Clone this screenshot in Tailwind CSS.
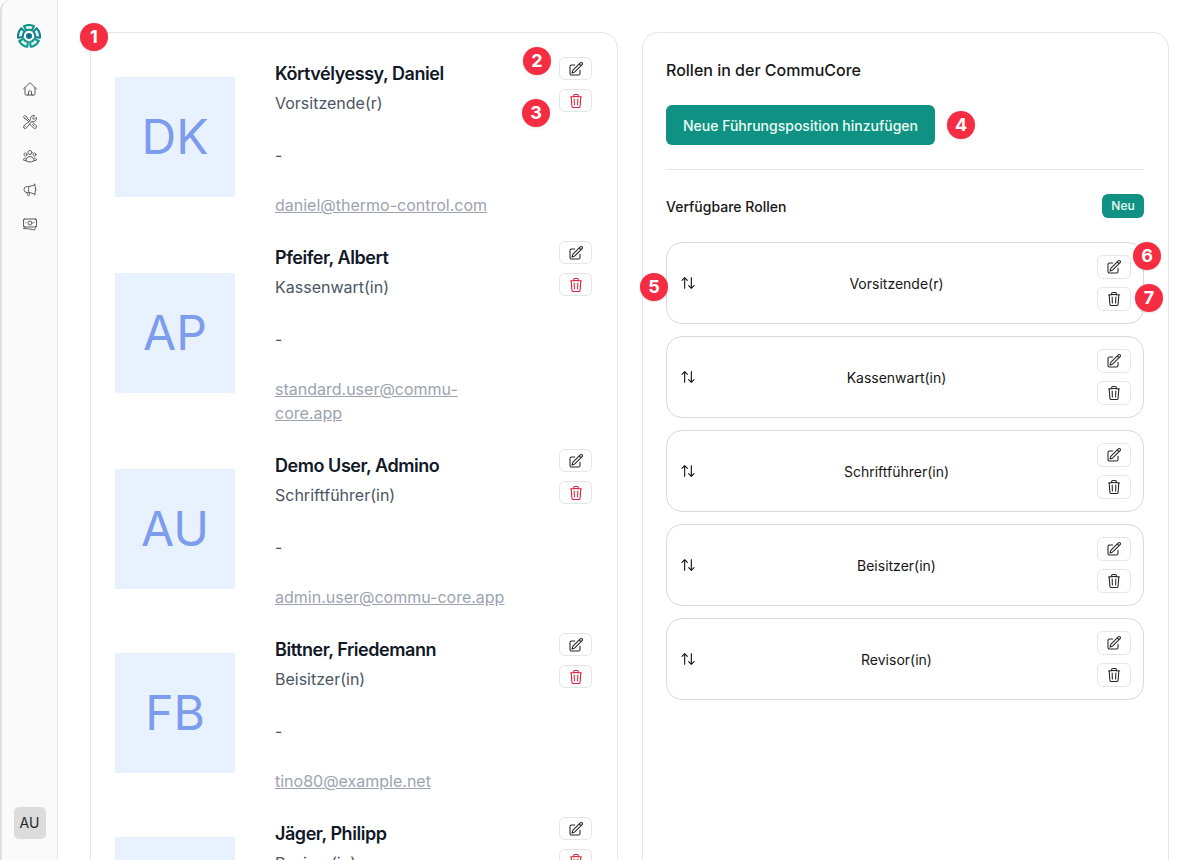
<!doctype html>
<html lang="de">
<head>
<meta charset="utf-8">
<script src="https://cdn.jsdelivr.net/npm/@tailwindcss/browser@4"></script>
<title>CommuCore</title>
</head>
<body class="bg-white">
<div class="relative flex h-[860px] w-[1200px] overflow-hidden bg-white font-['Inter',sans-serif] text-[#0f172a]">
  <aside class="flex h-full w-[58px] shrink-0 flex-col items-center rounded-tl-[10px] border-r border-l-2 border-r-[#e5e5e5] border-l-[#e0e0e0] bg-[#fafafa]">
    <svg class="mt-[24px] mr-px h-[24px] w-[24px]" viewBox="0 0 24 24" fill="#e3f3f1" stroke-width="2" stroke-linejoin="round">
      <circle cx="12" cy="12" r="3" fill="#0c6f8c"/>
      <path stroke="#0f9283" d="M7.01 2.2A11 11 0 0 1 16.99 2.2L14.81 6.48A6.2 6.2 0 0 0 9.19 6.48Z"/>
      <path stroke="#0e7f90" d="M19.78 4.22A11 11 0 0 1 22.86 13.72L18.12 12.97A6.2 6.2 0 0 0 16.38 7.62Z"/>
      <path stroke="#10968a" d="M21.8 16.99A11 11 0 0 1 13.72 22.86L12.97 18.12A6.2 6.2 0 0 0 17.52 14.81Z"/>
      <path stroke="#10968a" d="M2.2 16.99A11 11 0 0 0 10.28 22.86L11.03 18.12A6.2 6.2 0 0 1 6.48 14.81Z"/>
      <path stroke="#0e7f90" d="M4.22 4.22A11 11 0 0 0 1.14 13.72L5.88 12.97A6.2 6.2 0 0 1 7.62 7.62Z"/>
    </svg>
    <nav class="mt-[32px] flex flex-col items-center gap-[18px] text-[#5f5f5f]">
      <svg class="h-[16px] w-[16px] translate-y-px" viewBox="0 0 24 24" fill="none" stroke="currentColor" stroke-width="1.5" stroke-linecap="round" stroke-linejoin="round"><path d="m2.25 12 8.954-8.955c.44-.439 1.152-.439 1.591 0L21.75 12M4.5 9.75v10.125c0 .621.504 1.125 1.125 1.125H9.75v-4.875c0-.621.504-1.125 1.125-1.125h2.25c.621 0 1.125.504 1.125 1.125V21h4.125c.621 0 1.125-.504 1.125-1.125V9.75M8.25 21h8.25"/></svg>
      <svg class="h-[16px] w-[16px]" viewBox="0 0 24 24" fill="none" stroke="currentColor" stroke-width="1.5" stroke-linecap="round" stroke-linejoin="round"><path d="M11.42 15.17 17.25 21A2.652 2.652 0 0 0 21 17.25l-5.877-5.877M11.42 15.17l2.496-3.03c.317-.384.74-.626 1.208-.766M11.42 15.17l-4.655 5.653a2.548 2.548 0 1 1-3.586-3.586l6.837-5.63m5.108-.233c.55-.164 1.163-.188 1.743-.14a4.5 4.5 0 0 0 4.486-6.336l-3.276 3.277a3.004 3.004 0 0 1-2.25-2.25l3.276-3.276a4.5 4.5 0 0 0-6.336 4.486c.091 1.076-.071 2.264-.904 2.95l-.102.085m-1.745 1.437L5.909 7.5H4.5L2.25 3.75l1.5-1.5L7.5 4.5v1.409l4.26 4.26m-1.745 1.437 1.745-1.437m6.615 8.206L15.75 15.75M4.867 19.125h.008v.008h-.008v-.008Z"/></svg>
      <svg class="h-[16px] w-[16px]" viewBox="0 0 24 24" fill="none" stroke="currentColor" stroke-width="1.5" stroke-linecap="round" stroke-linejoin="round"><path d="M18 18.72a9.094 9.094 0 0 0 3.741-.479 3 3 0 0 0-4.682-2.72m.94 3.198.001.031c0 .225-.012.447-.037.666A11.944 11.944 0 0 1 12 21c-2.17 0-4.207-.576-5.963-1.584A6.062 6.062 0 0 1 6 18.719m12 0a5.971 5.971 0 0 0-.941-3.197m0 0A5.995 5.995 0 0 0 12 12.75a5.995 5.995 0 0 0-5.058 2.772m0 0a3 3 0 0 0-4.681 2.72 8.986 8.986 0 0 0 3.74.477m.94-3.197a5.971 5.971 0 0 0-.94 3.197M15 6.75a3 3 0 1 1-6 0 3 3 0 0 1 6 0Zm6 3a2.25 2.25 0 1 1-4.5 0 2.25 2.25 0 0 1 4.5 0Zm-13.5 0a2.25 2.25 0 1 1-4.5 0 2.25 2.25 0 0 1 4.5 0Z"/></svg>
      <svg class="h-[16px] w-[16px]" viewBox="0 0 24 24" fill="none" stroke="currentColor" stroke-width="1.5" stroke-linecap="round" stroke-linejoin="round"><path d="M10.34 15.84c-.688-.06-1.386-.09-2.09-.09H7.5a4.5 4.5 0 1 1 0-9h.75c.704 0 1.402-.03 2.09-.09m0 9.18c.253.962.584 1.892.985 2.783.247.55.06 1.21-.463 1.511l-.657.38c-.551.318-1.26.117-1.527-.461a20.845 20.845 0 0 1-1.44-4.282m3.102.069a18.03 18.03 0 0 1-.59-4.59c0-1.586.205-3.124.59-4.59m0 9.18a23.848 23.848 0 0 1 8.835 2.535M10.34 6.66a23.847 23.847 0 0 0 8.835-2.535m0 0A23.74 23.74 0 0 0 18.795 3m.38 1.125a23.91 23.91 0 0 1 1.014 5.395m-1.014 8.855c-.118.38-.245.754-.38 1.125m.38-1.125a23.91 23.91 0 0 0 1.014-5.395m0-3.46c.495.413.811 1.035.811 1.73 0 .695-.316 1.317-.811 1.73m0-3.46a24.347 24.347 0 0 1 0 3.46"/></svg>
      <svg class="h-[16px] w-[16px]" viewBox="0 0 24 24" fill="none" stroke="currentColor" stroke-width="1.5" stroke-linecap="round" stroke-linejoin="round"><path d="M2.25 18.75a60.07 60.07 0 0 1 15.797 2.101c.727.198 1.453-.342 1.453-1.096V18.75M3.75 4.5v.75A.75.75 0 0 1 3 6h-.75m0 0v-.375c0-.621.504-1.125 1.125-1.125H20.25M2.25 6v9m18-10.5v.75c0 .414.336.75.75.75h.75m-1.5-1.5h.375c.621 0 1.125.504 1.125 1.125v9.75c0 .621-.504 1.125-1.125 1.125h-.375m1.5-1.5H21a.75.75 0 0 0-.75.75v.75m0 0H3.75m0 0h-.375a1.125 1.125 0 0 1-1.125-1.125V15m1.5 1.5v-.75A.75.75 0 0 0 3 15h-.75M15 10.5a3 3 0 1 1-6 0 3 3 0 0 1 6 0Zm3 0h.008v.008H18V10.5Zm-12 0h.008v.008H6V10.5Z"/></svg>
    </nav>
    <div class="mt-auto mb-[21px] flex h-[32px] w-[32px] items-center justify-center rounded-[5px] bg-[#dcdcdc] text-sm text-[#262626]">AU</div>
  </aside>

  <main class="flex flex-1 items-start gap-[24px] pt-[32px] pl-[32px]">
    <section class="h-[900px] w-[528px] shrink-0 rounded-2xl border border-[#e5e5e5] pt-[24px] pr-[25px] pl-[24px]">
      <div class="flex flex-col gap-[24px]">
        <article class="flex items-center">
          <div class="flex h-[120px] w-[120px] shrink-0 items-center justify-center bg-[#e8f1fe] text-5xl text-[#7c9cec]">DK</div>
          <div class="ml-[40px] w-[240px] self-start">
            <h3 class="text-lg leading-[34px] font-semibold tracking-tight text-[#111827]">Körtvélyessy, Daniel</h3>
            <p class="text-base leading-[24px] text-[#4b5563]">Vorsitzende(r)</p>
            <p class="mt-[28px] text-base leading-[24px] text-[#4b5563]">-</p>
            <a class="mt-[26px] block text-base leading-[24px] text-[#9ca3af] underline">daniel@thermo-control.com</a>
          </div>
          <div class="ml-auto flex flex-col gap-[9px] self-start">
            <button class="flex h-[23px] w-[33px] items-center justify-center rounded-md border border-[#e5e5e5] bg-white text-[#262626]"><svg class="h-[16px] w-[16px]" viewBox="0 0 24 24" fill="none" stroke="currentColor" stroke-width="1.6" stroke-linecap="round" stroke-linejoin="round"><path d="m16.862 4.487 1.687-1.688a1.875 1.875 0 1 1 2.652 2.652L10.582 16.07a4.5 4.5 0 0 1-1.897 1.13L6 18l.8-2.685a4.5 4.5 0 0 1 1.13-1.897l8.932-8.931Zm0 0L19.5 7.125M18 14v4.75A2.25 2.25 0 0 1 15.75 21H5.25A2.25 2.25 0 0 1 3 18.75V8.25A2.25 2.25 0 0 1 5.25 6H10"/></svg></button>
            <button class="flex h-[23px] w-[33px] items-center justify-center rounded-md border border-[#e5e5e5] bg-white text-[#d9263d]"><svg class="h-[16px] w-[16px]" viewBox="0 0 24 24" fill="none" stroke="currentColor" stroke-width="1.6" stroke-linecap="round" stroke-linejoin="round"><path d="m14.74 9-.346 9m-4.788 0L9.26 9m9.968-3.21c.342.052.682.107 1.022.166m-1.022-.165L18.16 19.673a2.25 2.25 0 0 1-2.244 2.077H8.084a2.25 2.25 0 0 1-2.244-2.077L4.772 5.79m14.456 0a48.108 48.108 0 0 0-3.478-.397m-12 .562c.34-.059.68-.114 1.022-.165m0 0a48.11 48.11 0 0 1 3.478-.397m7.5 0v-.916c0-1.18-.91-2.164-2.09-2.201a51.964 51.964 0 0 0-3.32 0c-1.18.037-2.09 1.022-2.09 2.201v.916m7.5 0a48.667 48.667 0 0 0-7.5 0"/></svg></button>
          </div>
        </article>
        <article class="flex items-center">
          <div class="flex h-[120px] w-[120px] shrink-0 items-center justify-center bg-[#e8f1fe] text-5xl text-[#7c9cec]">AP</div>
          <div class="ml-[40px] w-[240px] self-start">
            <h3 class="text-lg leading-[34px] font-semibold tracking-tight text-[#111827]">Pfeifer, Albert</h3>
            <p class="text-base leading-[24px] text-[#4b5563]">Kassenwart(in)</p>
            <p class="mt-[28px] text-base leading-[24px] text-[#4b5563]">-</p>
            <a class="mt-[26px] block text-base leading-[24px] text-[#9ca3af] underline">standard.user@commu-core.app</a>
          </div>
          <div class="ml-auto flex flex-col gap-[9px] self-start">
            <button class="flex h-[23px] w-[33px] items-center justify-center rounded-md border border-[#e5e5e5] bg-white text-[#262626]"><svg class="h-[16px] w-[16px]" viewBox="0 0 24 24" fill="none" stroke="currentColor" stroke-width="1.6" stroke-linecap="round" stroke-linejoin="round"><path d="m16.862 4.487 1.687-1.688a1.875 1.875 0 1 1 2.652 2.652L10.582 16.07a4.5 4.5 0 0 1-1.897 1.13L6 18l.8-2.685a4.5 4.5 0 0 1 1.13-1.897l8.932-8.931Zm0 0L19.5 7.125M18 14v4.75A2.25 2.25 0 0 1 15.75 21H5.25A2.25 2.25 0 0 1 3 18.75V8.25A2.25 2.25 0 0 1 5.25 6H10"/></svg></button>
            <button class="flex h-[23px] w-[33px] items-center justify-center rounded-md border border-[#e5e5e5] bg-white text-[#d9263d]"><svg class="h-[16px] w-[16px]" viewBox="0 0 24 24" fill="none" stroke="currentColor" stroke-width="1.6" stroke-linecap="round" stroke-linejoin="round"><path d="m14.74 9-.346 9m-4.788 0L9.26 9m9.968-3.21c.342.052.682.107 1.022.166m-1.022-.165L18.16 19.673a2.25 2.25 0 0 1-2.244 2.077H8.084a2.25 2.25 0 0 1-2.244-2.077L4.772 5.79m14.456 0a48.108 48.108 0 0 0-3.478-.397m-12 .562c.34-.059.68-.114 1.022-.165m0 0a48.11 48.11 0 0 1 3.478-.397m7.5 0v-.916c0-1.18-.91-2.164-2.09-2.201a51.964 51.964 0 0 0-3.32 0c-1.18.037-2.09 1.022-2.09 2.201v.916m7.5 0a48.667 48.667 0 0 0-7.5 0"/></svg></button>
          </div>
        </article>
        <article class="flex items-center">
          <div class="flex h-[120px] w-[120px] shrink-0 items-center justify-center bg-[#e8f1fe] text-5xl text-[#7c9cec]">AU</div>
          <div class="ml-[40px] w-[240px] self-start">
            <h3 class="text-lg leading-[34px] font-semibold tracking-tight text-[#111827]">Demo User, Admino</h3>
            <p class="text-base leading-[24px] text-[#4b5563]">Schriftführer(in)</p>
            <p class="mt-[28px] text-base leading-[24px] text-[#4b5563]">-</p>
            <a class="mt-[26px] block text-base leading-[24px] text-[#9ca3af] underline">admin.user@commu-core.app</a>
          </div>
          <div class="ml-auto flex flex-col gap-[9px] self-start">
            <button class="flex h-[23px] w-[33px] items-center justify-center rounded-md border border-[#e5e5e5] bg-white text-[#262626]"><svg class="h-[16px] w-[16px]" viewBox="0 0 24 24" fill="none" stroke="currentColor" stroke-width="1.6" stroke-linecap="round" stroke-linejoin="round"><path d="m16.862 4.487 1.687-1.688a1.875 1.875 0 1 1 2.652 2.652L10.582 16.07a4.5 4.5 0 0 1-1.897 1.13L6 18l.8-2.685a4.5 4.5 0 0 1 1.13-1.897l8.932-8.931Zm0 0L19.5 7.125M18 14v4.75A2.25 2.25 0 0 1 15.75 21H5.25A2.25 2.25 0 0 1 3 18.75V8.25A2.25 2.25 0 0 1 5.25 6H10"/></svg></button>
            <button class="flex h-[23px] w-[33px] items-center justify-center rounded-md border border-[#e5e5e5] bg-white text-[#d9263d]"><svg class="h-[16px] w-[16px]" viewBox="0 0 24 24" fill="none" stroke="currentColor" stroke-width="1.6" stroke-linecap="round" stroke-linejoin="round"><path d="m14.74 9-.346 9m-4.788 0L9.26 9m9.968-3.21c.342.052.682.107 1.022.166m-1.022-.165L18.16 19.673a2.25 2.25 0 0 1-2.244 2.077H8.084a2.25 2.25 0 0 1-2.244-2.077L4.772 5.79m14.456 0a48.108 48.108 0 0 0-3.478-.397m-12 .562c.34-.059.68-.114 1.022-.165m0 0a48.11 48.11 0 0 1 3.478-.397m7.5 0v-.916c0-1.18-.91-2.164-2.09-2.201a51.964 51.964 0 0 0-3.32 0c-1.18.037-2.09 1.022-2.09 2.201v.916m7.5 0a48.667 48.667 0 0 0-7.5 0"/></svg></button>
          </div>
        </article>
        <article class="flex items-center">
          <div class="flex h-[120px] w-[120px] shrink-0 items-center justify-center bg-[#e8f1fe] text-5xl text-[#7c9cec]">FB</div>
          <div class="ml-[40px] w-[240px] self-start">
            <h3 class="text-lg leading-[34px] font-semibold tracking-tight text-[#111827]">Bittner, Friedemann</h3>
            <p class="text-base leading-[24px] text-[#4b5563]">Beisitzer(in)</p>
            <p class="mt-[28px] text-base leading-[24px] text-[#4b5563]">-</p>
            <a class="mt-[26px] block text-base leading-[24px] text-[#9ca3af] underline">tino80@example.net</a>
          </div>
          <div class="ml-auto flex flex-col gap-[9px] self-start">
            <button class="flex h-[23px] w-[33px] items-center justify-center rounded-md border border-[#e5e5e5] bg-white text-[#262626]"><svg class="h-[16px] w-[16px]" viewBox="0 0 24 24" fill="none" stroke="currentColor" stroke-width="1.6" stroke-linecap="round" stroke-linejoin="round"><path d="m16.862 4.487 1.687-1.688a1.875 1.875 0 1 1 2.652 2.652L10.582 16.07a4.5 4.5 0 0 1-1.897 1.13L6 18l.8-2.685a4.5 4.5 0 0 1 1.13-1.897l8.932-8.931Zm0 0L19.5 7.125M18 14v4.75A2.25 2.25 0 0 1 15.75 21H5.25A2.25 2.25 0 0 1 3 18.75V8.25A2.25 2.25 0 0 1 5.25 6H10"/></svg></button>
            <button class="flex h-[23px] w-[33px] items-center justify-center rounded-md border border-[#e5e5e5] bg-white text-[#d9263d]"><svg class="h-[16px] w-[16px]" viewBox="0 0 24 24" fill="none" stroke="currentColor" stroke-width="1.6" stroke-linecap="round" stroke-linejoin="round"><path d="m14.74 9-.346 9m-4.788 0L9.26 9m9.968-3.21c.342.052.682.107 1.022.166m-1.022-.165L18.16 19.673a2.25 2.25 0 0 1-2.244 2.077H8.084a2.25 2.25 0 0 1-2.244-2.077L4.772 5.79m14.456 0a48.108 48.108 0 0 0-3.478-.397m-12 .562c.34-.059.68-.114 1.022-.165m0 0a48.11 48.11 0 0 1 3.478-.397m7.5 0v-.916c0-1.18-.91-2.164-2.09-2.201a51.964 51.964 0 0 0-3.32 0c-1.18.037-2.09 1.022-2.09 2.201v.916m7.5 0a48.667 48.667 0 0 0-7.5 0"/></svg></button>
          </div>
        </article>
        <article class="flex items-center">
          <div class="flex h-[120px] w-[120px] shrink-0 items-center justify-center bg-[#e8f1fe] text-5xl text-[#7c9cec]">JP</div>
          <div class="ml-[40px] w-[240px] self-start">
            <h3 class="text-lg leading-[34px] font-semibold tracking-tight text-[#111827]">Jäger, Philipp</h3>
            <p class="text-base leading-[24px] text-[#4b5563]">Revisor(in)</p>
            <p class="mt-[28px] text-base leading-[24px] text-[#4b5563]">-</p>
            <a class="mt-[26px] block text-base leading-[24px] text-[#9ca3af] underline">philipp@example.net</a>
          </div>
          <div class="ml-auto flex flex-col gap-[9px] self-start">
            <button class="flex h-[23px] w-[33px] items-center justify-center rounded-md border border-[#e5e5e5] bg-white text-[#262626]"><svg class="h-[16px] w-[16px]" viewBox="0 0 24 24" fill="none" stroke="currentColor" stroke-width="1.6" stroke-linecap="round" stroke-linejoin="round"><path d="m16.862 4.487 1.687-1.688a1.875 1.875 0 1 1 2.652 2.652L10.582 16.07a4.5 4.5 0 0 1-1.897 1.13L6 18l.8-2.685a4.5 4.5 0 0 1 1.13-1.897l8.932-8.931Zm0 0L19.5 7.125M18 14v4.75A2.25 2.25 0 0 1 15.75 21H5.25A2.25 2.25 0 0 1 3 18.75V8.25A2.25 2.25 0 0 1 5.25 6H10"/></svg></button>
            <button class="flex h-[23px] w-[33px] items-center justify-center rounded-md border border-[#e5e5e5] bg-white text-[#d9263d]"><svg class="h-[16px] w-[16px]" viewBox="0 0 24 24" fill="none" stroke="currentColor" stroke-width="1.6" stroke-linecap="round" stroke-linejoin="round"><path d="m14.74 9-.346 9m-4.788 0L9.26 9m9.968-3.21c.342.052.682.107 1.022.166m-1.022-.165L18.16 19.673a2.25 2.25 0 0 1-2.244 2.077H8.084a2.25 2.25 0 0 1-2.244-2.077L4.772 5.79m14.456 0a48.108 48.108 0 0 0-3.478-.397m-12 .562c.34-.059.68-.114 1.022-.165m0 0a48.11 48.11 0 0 1 3.478-.397m7.5 0v-.916c0-1.18-.91-2.164-2.09-2.201a51.964 51.964 0 0 0-3.32 0c-1.18.037-2.09 1.022-2.09 2.201v.916m7.5 0a48.667 48.667 0 0 0-7.5 0"/></svg></button>
          </div>
        </article>
      </div>
    </section>

    <section class="h-[900px] w-[527px] shrink-0 rounded-2xl border border-[#e5e5e5] pt-[24px] pr-[24px] pl-[23px]">
      <h2 class="h-[24px] pt-px text-base leading-[24px] font-medium text-[#171717]">Rollen in der CommuCore</h2>
      <button class="mt-[24px] flex h-[40px] w-[269px] items-center justify-center rounded-md bg-[#0f9283] pt-px text-sm font-medium text-[#ecfdf5]">Neue Führungsposition hinzufügen</button>
      <div class="mt-[24px] h-px bg-[#e5e5e5]"></div>
      <div class="mt-[24px] flex items-center justify-between">
        <h3 class="pt-px text-sm font-medium text-[#171717]">Verfügbare Rollen</h3>
        <button class="flex h-[24px] w-[42px] items-center justify-center rounded-md bg-[#0f9283] text-xs font-medium text-[#ecfdf5]">Neu</button>
      </div>
      <div class="mt-[24px] flex flex-col gap-[12px]">
        <div class="flex h-[82px] items-center rounded-2xl border border-[#d9d9d9] pr-[12px] pl-[13px]">
          <svg class="h-[16px] w-[16px] shrink-0 text-[#171717]" viewBox="0 0 24 24" fill="none" stroke="currentColor" stroke-width="1.7" stroke-linecap="round" stroke-linejoin="round"><path d="m21 16-4 4-4-4M17 20V4M3 8l4-4 4 4M7 4v16"/></svg>
          <span class="flex-1 pt-px text-center text-sm text-[#171717]">Vorsitzende(r)</span>
          <div class="flex flex-col gap-[8px]">
            <button class="flex h-[24px] w-[34px] items-center justify-center rounded-md border border-[#e5e5e5] bg-white text-[#262626]"><svg class="h-[16px] w-[16px]" viewBox="0 0 24 24" fill="none" stroke="currentColor" stroke-width="1.6" stroke-linecap="round" stroke-linejoin="round"><path d="m16.862 4.487 1.687-1.688a1.875 1.875 0 1 1 2.652 2.652L10.582 16.07a4.5 4.5 0 0 1-1.897 1.13L6 18l.8-2.685a4.5 4.5 0 0 1 1.13-1.897l8.932-8.931Zm0 0L19.5 7.125M18 14v4.75A2.25 2.25 0 0 1 15.75 21H5.25A2.25 2.25 0 0 1 3 18.75V8.25A2.25 2.25 0 0 1 5.25 6H10"/></svg></button>
            <button class="flex h-[24px] w-[34px] items-center justify-center rounded-md border border-[#e5e5e5] bg-white text-[#262626]"><svg class="h-[16px] w-[16px]" viewBox="0 0 24 24" fill="none" stroke="currentColor" stroke-width="1.6" stroke-linecap="round" stroke-linejoin="round"><path d="m14.74 9-.346 9m-4.788 0L9.26 9m9.968-3.21c.342.052.682.107 1.022.166m-1.022-.165L18.16 19.673a2.25 2.25 0 0 1-2.244 2.077H8.084a2.25 2.25 0 0 1-2.244-2.077L4.772 5.79m14.456 0a48.108 48.108 0 0 0-3.478-.397m-12 .562c.34-.059.68-.114 1.022-.165m0 0a48.11 48.11 0 0 1 3.478-.397m7.5 0v-.916c0-1.18-.91-2.164-2.09-2.201a51.964 51.964 0 0 0-3.32 0c-1.18.037-2.09 1.022-2.09 2.201v.916m7.5 0a48.667 48.667 0 0 0-7.5 0"/></svg></button>
          </div>
        </div>
        <div class="flex h-[82px] items-center rounded-2xl border border-[#d9d9d9] pr-[12px] pl-[13px]">
          <svg class="h-[16px] w-[16px] shrink-0 text-[#171717]" viewBox="0 0 24 24" fill="none" stroke="currentColor" stroke-width="1.7" stroke-linecap="round" stroke-linejoin="round"><path d="m21 16-4 4-4-4M17 20V4M3 8l4-4 4 4M7 4v16"/></svg>
          <span class="flex-1 pt-px text-center text-sm text-[#171717]">Kassenwart(in)</span>
          <div class="flex flex-col gap-[8px]">
            <button class="flex h-[24px] w-[34px] items-center justify-center rounded-md border border-[#e5e5e5] bg-white text-[#262626]"><svg class="h-[16px] w-[16px]" viewBox="0 0 24 24" fill="none" stroke="currentColor" stroke-width="1.6" stroke-linecap="round" stroke-linejoin="round"><path d="m16.862 4.487 1.687-1.688a1.875 1.875 0 1 1 2.652 2.652L10.582 16.07a4.5 4.5 0 0 1-1.897 1.13L6 18l.8-2.685a4.5 4.5 0 0 1 1.13-1.897l8.932-8.931Zm0 0L19.5 7.125M18 14v4.75A2.25 2.25 0 0 1 15.75 21H5.25A2.25 2.25 0 0 1 3 18.75V8.25A2.25 2.25 0 0 1 5.25 6H10"/></svg></button>
            <button class="flex h-[24px] w-[34px] items-center justify-center rounded-md border border-[#e5e5e5] bg-white text-[#262626]"><svg class="h-[16px] w-[16px]" viewBox="0 0 24 24" fill="none" stroke="currentColor" stroke-width="1.6" stroke-linecap="round" stroke-linejoin="round"><path d="m14.74 9-.346 9m-4.788 0L9.26 9m9.968-3.21c.342.052.682.107 1.022.166m-1.022-.165L18.16 19.673a2.25 2.25 0 0 1-2.244 2.077H8.084a2.25 2.25 0 0 1-2.244-2.077L4.772 5.79m14.456 0a48.108 48.108 0 0 0-3.478-.397m-12 .562c.34-.059.68-.114 1.022-.165m0 0a48.11 48.11 0 0 1 3.478-.397m7.5 0v-.916c0-1.18-.91-2.164-2.09-2.201a51.964 51.964 0 0 0-3.32 0c-1.18.037-2.09 1.022-2.09 2.201v.916m7.5 0a48.667 48.667 0 0 0-7.5 0"/></svg></button>
          </div>
        </div>
        <div class="flex h-[82px] items-center rounded-2xl border border-[#d9d9d9] pr-[12px] pl-[13px]">
          <svg class="h-[16px] w-[16px] shrink-0 text-[#171717]" viewBox="0 0 24 24" fill="none" stroke="currentColor" stroke-width="1.7" stroke-linecap="round" stroke-linejoin="round"><path d="m21 16-4 4-4-4M17 20V4M3 8l4-4 4 4M7 4v16"/></svg>
          <span class="flex-1 pt-px text-center text-sm text-[#171717]">Schriftführer(in)</span>
          <div class="flex flex-col gap-[8px]">
            <button class="flex h-[24px] w-[34px] items-center justify-center rounded-md border border-[#e5e5e5] bg-white text-[#262626]"><svg class="h-[16px] w-[16px]" viewBox="0 0 24 24" fill="none" stroke="currentColor" stroke-width="1.6" stroke-linecap="round" stroke-linejoin="round"><path d="m16.862 4.487 1.687-1.688a1.875 1.875 0 1 1 2.652 2.652L10.582 16.07a4.5 4.5 0 0 1-1.897 1.13L6 18l.8-2.685a4.5 4.5 0 0 1 1.13-1.897l8.932-8.931Zm0 0L19.5 7.125M18 14v4.75A2.25 2.25 0 0 1 15.75 21H5.25A2.25 2.25 0 0 1 3 18.75V8.25A2.25 2.25 0 0 1 5.25 6H10"/></svg></button>
            <button class="flex h-[24px] w-[34px] items-center justify-center rounded-md border border-[#e5e5e5] bg-white text-[#262626]"><svg class="h-[16px] w-[16px]" viewBox="0 0 24 24" fill="none" stroke="currentColor" stroke-width="1.6" stroke-linecap="round" stroke-linejoin="round"><path d="m14.74 9-.346 9m-4.788 0L9.26 9m9.968-3.21c.342.052.682.107 1.022.166m-1.022-.165L18.16 19.673a2.25 2.25 0 0 1-2.244 2.077H8.084a2.25 2.25 0 0 1-2.244-2.077L4.772 5.79m14.456 0a48.108 48.108 0 0 0-3.478-.397m-12 .562c.34-.059.68-.114 1.022-.165m0 0a48.11 48.11 0 0 1 3.478-.397m7.5 0v-.916c0-1.18-.91-2.164-2.09-2.201a51.964 51.964 0 0 0-3.32 0c-1.18.037-2.09 1.022-2.09 2.201v.916m7.5 0a48.667 48.667 0 0 0-7.5 0"/></svg></button>
          </div>
        </div>
        <div class="flex h-[82px] items-center rounded-2xl border border-[#d9d9d9] pr-[12px] pl-[13px]">
          <svg class="h-[16px] w-[16px] shrink-0 text-[#171717]" viewBox="0 0 24 24" fill="none" stroke="currentColor" stroke-width="1.7" stroke-linecap="round" stroke-linejoin="round"><path d="m21 16-4 4-4-4M17 20V4M3 8l4-4 4 4M7 4v16"/></svg>
          <span class="flex-1 pt-px text-center text-sm text-[#171717]">Beisitzer(in)</span>
          <div class="flex flex-col gap-[8px]">
            <button class="flex h-[24px] w-[34px] items-center justify-center rounded-md border border-[#e5e5e5] bg-white text-[#262626]"><svg class="h-[16px] w-[16px]" viewBox="0 0 24 24" fill="none" stroke="currentColor" stroke-width="1.6" stroke-linecap="round" stroke-linejoin="round"><path d="m16.862 4.487 1.687-1.688a1.875 1.875 0 1 1 2.652 2.652L10.582 16.07a4.5 4.5 0 0 1-1.897 1.13L6 18l.8-2.685a4.5 4.5 0 0 1 1.13-1.897l8.932-8.931Zm0 0L19.5 7.125M18 14v4.75A2.25 2.25 0 0 1 15.75 21H5.25A2.25 2.25 0 0 1 3 18.75V8.25A2.25 2.25 0 0 1 5.25 6H10"/></svg></button>
            <button class="flex h-[24px] w-[34px] items-center justify-center rounded-md border border-[#e5e5e5] bg-white text-[#262626]"><svg class="h-[16px] w-[16px]" viewBox="0 0 24 24" fill="none" stroke="currentColor" stroke-width="1.6" stroke-linecap="round" stroke-linejoin="round"><path d="m14.74 9-.346 9m-4.788 0L9.26 9m9.968-3.21c.342.052.682.107 1.022.166m-1.022-.165L18.16 19.673a2.25 2.25 0 0 1-2.244 2.077H8.084a2.25 2.25 0 0 1-2.244-2.077L4.772 5.79m14.456 0a48.108 48.108 0 0 0-3.478-.397m-12 .562c.34-.059.68-.114 1.022-.165m0 0a48.11 48.11 0 0 1 3.478-.397m7.5 0v-.916c0-1.18-.91-2.164-2.09-2.201a51.964 51.964 0 0 0-3.32 0c-1.18.037-2.09 1.022-2.09 2.201v.916m7.5 0a48.667 48.667 0 0 0-7.5 0"/></svg></button>
          </div>
        </div>
        <div class="flex h-[82px] items-center rounded-2xl border border-[#d9d9d9] pr-[12px] pl-[13px]">
          <svg class="h-[16px] w-[16px] shrink-0 text-[#171717]" viewBox="0 0 24 24" fill="none" stroke="currentColor" stroke-width="1.7" stroke-linecap="round" stroke-linejoin="round"><path d="m21 16-4 4-4-4M17 20V4M3 8l4-4 4 4M7 4v16"/></svg>
          <span class="flex-1 pt-px text-center text-sm text-[#171717]">Revisor(in)</span>
          <div class="flex flex-col gap-[8px]">
            <button class="flex h-[24px] w-[34px] items-center justify-center rounded-md border border-[#e5e5e5] bg-white text-[#262626]"><svg class="h-[16px] w-[16px]" viewBox="0 0 24 24" fill="none" stroke="currentColor" stroke-width="1.6" stroke-linecap="round" stroke-linejoin="round"><path d="m16.862 4.487 1.687-1.688a1.875 1.875 0 1 1 2.652 2.652L10.582 16.07a4.5 4.5 0 0 1-1.897 1.13L6 18l.8-2.685a4.5 4.5 0 0 1 1.13-1.897l8.932-8.931Zm0 0L19.5 7.125M18 14v4.75A2.25 2.25 0 0 1 15.75 21H5.25A2.25 2.25 0 0 1 3 18.75V8.25A2.25 2.25 0 0 1 5.25 6H10"/></svg></button>
            <button class="flex h-[24px] w-[34px] items-center justify-center rounded-md border border-[#e5e5e5] bg-white text-[#262626]"><svg class="h-[16px] w-[16px]" viewBox="0 0 24 24" fill="none" stroke="currentColor" stroke-width="1.6" stroke-linecap="round" stroke-linejoin="round"><path d="m14.74 9-.346 9m-4.788 0L9.26 9m9.968-3.21c.342.052.682.107 1.022.166m-1.022-.165L18.16 19.673a2.25 2.25 0 0 1-2.244 2.077H8.084a2.25 2.25 0 0 1-2.244-2.077L4.772 5.79m14.456 0a48.108 48.108 0 0 0-3.478-.397m-12 .562c.34-.059.68-.114 1.022-.165m0 0a48.11 48.11 0 0 1 3.478-.397m7.5 0v-.916c0-1.18-.91-2.164-2.09-2.201a51.964 51.964 0 0 0-3.32 0c-1.18.037-2.09 1.022-2.09 2.201v.916m7.5 0a48.667 48.667 0 0 0-7.5 0"/></svg></button>
          </div>
        </div>
      </div>
    </section>
  </main>

  <span class="absolute top-[23px] left-[80px] flex h-[28px] w-[28px] items-center justify-center rounded-full bg-[#f52d42] text-lg font-bold text-white shadow-sm">1</span>
  <span class="absolute top-[47px] left-[523px] flex h-[28px] w-[28px] items-center justify-center rounded-full bg-[#f52d42] text-lg font-bold text-white shadow-sm">2</span>
  <span class="absolute top-[99px] left-[522px] flex h-[28px] w-[28px] items-center justify-center rounded-full bg-[#f52d42] text-lg font-bold text-white shadow-sm">3</span>
  <span class="absolute top-[111px] left-[947px] flex h-[28px] w-[28px] items-center justify-center rounded-full bg-[#f52d42] text-lg font-bold text-white shadow-sm">4</span>
  <span class="absolute top-[273px] left-[640px] flex h-[28px] w-[28px] items-center justify-center rounded-full bg-[#f52d42] text-lg font-bold text-white shadow-sm">5</span>
  <span class="absolute top-[242px] left-[1133px] flex h-[28px] w-[28px] items-center justify-center rounded-full bg-[#f52d42] text-lg font-bold text-white shadow-sm">6</span>
  <span class="absolute top-[284px] left-[1135px] flex h-[28px] w-[28px] items-center justify-center rounded-full bg-[#f52d42] text-lg font-bold text-white shadow-sm">7</span>
</div>
</body>
</html>
